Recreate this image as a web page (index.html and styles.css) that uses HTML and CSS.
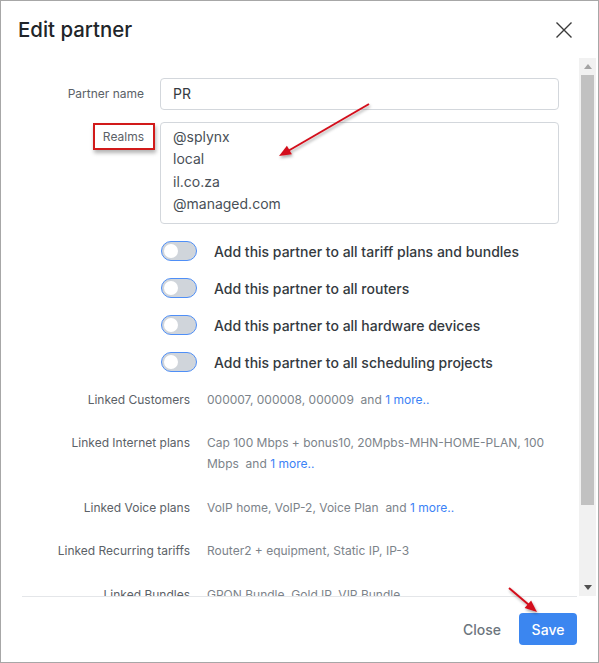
FILE: index.html
```html
<!DOCTYPE html>
<html lang="en">
<head>
<meta charset="utf-8">
<title>Edit partner</title>
<link rel="stylesheet" href="styles.css">
</head>
<body>
<div class="modal">
  <header class="modal-header">
    <h1 class="modal-title">Edit partner</h1>
    <button class="close-x" aria-label="Close">
      <svg width="16" height="16" viewBox="0 0 16 16"><path d="M0.5 0.5L15.5 15.5M15.5 0.5L0.5 15.5" stroke="#3a3a3a" stroke-width="1.4" fill="none"/></svg>
    </button>
  </header>
  <div class="modal-body">
    <div class="scroll-content">
      <div class="form-grid">
        <div class="label">Partner name</div>
        <div class="input">PR</div>
        <div class="label label-realms"><span class="highlight">Realms</span></div>
        <div class="input textarea">@splynx<br>local<br>il.co.za<br>@managed.com</div>
      </div>
      <div class="toggles">
        <div class="toggle-row"><span class="switch"></span><span class="toggle-label">Add this partner to all tariff plans and bundles</span></div>
        <div class="toggle-row"><span class="switch"></span><span class="toggle-label">Add this partner to all routers</span></div>
        <div class="toggle-row"><span class="switch"></span><span class="toggle-label">Add this partner to all hardware devices</span></div>
        <div class="toggle-row"><span class="switch"></span><span class="toggle-label">Add this partner to all scheduling projects</span></div>
      </div>
      <div class="linked">
        <div class="linked-label">Linked Customers</div>
        <div class="linked-value">000007, 000008, 000009 &nbsp;and <a class="more" href="#">1 more..</a></div>
        <div class="linked-label">Linked Internet plans</div>
        <div class="linked-value">Cap 100 Mbps + bonus10, 20Mpbs-MHN-HOME-PLAN, 100 Mbps &nbsp;and <a class="more" href="#">1 more..</a></div>
        <div class="linked-label">Linked Voice plans</div>
        <div class="linked-value">VoIP home, VoIP-2, Voice Plan &nbsp;and <a class="more" href="#">1 more..</a></div>
        <div class="linked-label">Linked Recurring tariffs</div>
        <div class="linked-value">Router2 + equipment, Static IP, IP-3</div>
        <div class="linked-label">Linked Bundles</div>
        <div class="linked-value">GPON Bundle, Gold IP, VIP Bundle</div>
      </div>
    </div>
    <div class="scrollbar">
      <div class="sb-btn"><svg width="8" height="5" viewBox="0 0 8 5"><path d="M4 0L8 5H0Z" fill="#a3a3a3"/></svg></div>
      <div class="sb-track"><div class="sb-thumb"></div></div>
      <div class="sb-btn"><svg width="8" height="5" viewBox="0 0 8 5"><path d="M0 0H8L4 5Z" fill="#505050"/></svg></div>
    </div>
  </div>
  <footer class="modal-footer">
    <button class="btn-link">Close</button>
    <button class="btn-primary">Save</button>
  </footer>
  <svg class="annotations" width="599" height="663" viewBox="0 0 599 663">
    <defs>
      <filter id="sh" x="-20%" y="-20%" width="140%" height="160%">
        <feDropShadow dx="1" dy="2" stdDeviation="1.5" flood-color="#000" flood-opacity="0.35"/>
      </filter>
    </defs>
    <g filter="url(#sh)" fill="#d3111b" stroke="#d3111b">
      <line x1="369" y1="104" x2="288" y2="151" stroke-width="2"/>
      <path d="M279 156L291.9 154.3L286.9 145.7Z" stroke="none"/>
      <line x1="509" y1="588" x2="529" y2="605" stroke-width="2"/>
      <path d="M537 612L524.6 608L531.1 600.4Z" stroke="none"/>
    </g>
  </svg>
</div>
</body>
</html>
```

FILE: styles.css
```css
* {
  box-sizing: border-box;
}

body {
  margin: 0;
  font-family: Inter, "Noto Sans", sans-serif;
  background: #fff;
}

.modal {
  position: relative;
  width: 599px;
  height: 663px;
  border: 1px solid #a7a7a7;
  background: #fff;
  display: flex;
  flex-direction: column;
  overflow: hidden;
}

.modal-header {
  flex: none;
  height: 57px;
  display: flex;
  align-items: center;
  justify-content: space-between;
  padding: 0 26px 0 17px;
}

.modal-title {
  margin: 1px 0 0;
  font-size: 20.4px;
  font-weight: 500;
  line-height: 24px;
  color: #212529;
}

.close-x {
  border: 0;
  background: none;
  padding: 0;
  width: 16px;
  height: 16px;
  display: flex;
  margin-top: 1px;
}

.modal-body {
  flex: none;
  height: 538px;
  display: flex;
}

.scroll-content {
  flex: 1;
  overflow: hidden;
  padding: 20px 20px 0 0;
}

.form-grid {
  display: grid;
  grid-template-columns: 143px 1fr;
  column-gap: 16px;
  row-gap: 12px;
}

.label {
  text-align: right;
  font-size: 12px;
  line-height: 20px;
  padding-top: 6px;
  color: #5b6167;
}

.label-realms {
  padding-top: 1px;
}

.highlight {
  display: inline-block;
  border: 2px solid #d11a1a;
  padding: 2px 9px 2px 8px;
  line-height: 19px;
  margin-right: -11px;
  box-shadow: 1px 3px 4px rgba(0, 0, 0, 0.3);
}

.input {
  height: 32px;
  border: 1px solid #d3d7dc;
  border-radius: 4px;
  padding: 0 12px;
  font-size: 14px;
  line-height: 30px;
  color: #343a40;
}

.textarea {
  height: 102px;
  padding: 3px 12px;
  line-height: 22.33px;
  color: #495057;
}

.toggles {
  margin: 17px 0 0 160px;
  display: flex;
  flex-direction: column;
  gap: 17px;
}

.toggle-row {
  display: flex;
  align-items: center;
  gap: 17px;
  height: 20px;
}

.switch {
  position: relative;
  flex: none;
  width: 36px;
  height: 20px;
  border-radius: 10px;
  background: #d0d5db;
  border: 1.5px solid #4f8ff7;
}

.switch::after {
  content: "";
  position: absolute;
  left: 1.5px;
  top: 1.5px;
  width: 14px;
  height: 14px;
  border-radius: 50%;
  background: #fff;
}

.toggle-label {
  font-size: 14px;
  font-weight: 500;
  color: #343a40;
}

.linked {
  margin-top: 16.5px;
  display: grid;
  grid-template-columns: 189px 1fr;
  column-gap: 17px;
  row-gap: 22.5px;
  font-size: 12px;
  line-height: 21px;
}

.linked-label {
  text-align: right;
  color: #5b6167;
}

.linked-value {
  color: #7c838a;
}

.more {
  color: #3b82f6;
  text-decoration: none;
}

.scrollbar {
  flex: none;
  width: 17px;
  margin-right: 2px;
  background: #f1f1f1;
  display: flex;
  flex-direction: column;
}

.sb-btn {
  flex: none;
  height: 17px;
  display: flex;
  align-items: center;
  justify-content: center;
}

.sb-track {
  flex: 1;
  padding: 0 2px;
}

.sb-thumb {
  height: 430px;
  background: #c1c1c1;
}

.modal-footer {
  flex: none;
  height: 66px;
  margin: 0 21px;
  border-top: 1px solid #e4e6e9;
  padding-top: 16px;
  display: flex;
  justify-content: flex-end;
  align-items: flex-start;
}

.btn-link {
  height: 32px;
  padding: 0 12px;
  margin-right: 6px;
  border: 0;
  background: none;
  font-family: Inter, "Noto Sans", sans-serif;
  font-size: 14px;
  font-weight: 500;
  color: #6c757d;
}

.btn-primary {
  width: 58px;
  height: 32px;
  border: 0;
  border-radius: 4px;
  background: #3b86f0;
  font-family: Inter, "Noto Sans", sans-serif;
  font-size: 14px;
  font-weight: 500;
  color: #fff;
}

.annotations {
  position: absolute;
  left: -1px;
  top: -1px;
  pointer-events: none;
}
```
